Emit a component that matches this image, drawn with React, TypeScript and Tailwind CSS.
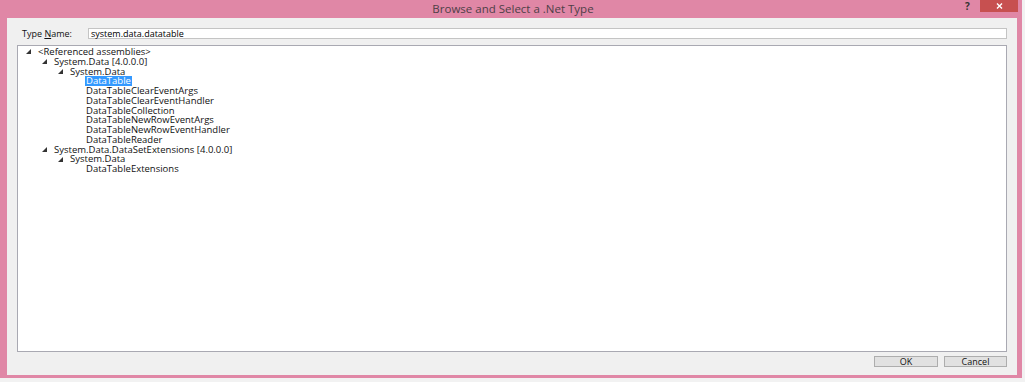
type Node = { label: string; depth: number; expander?: boolean; selected?: boolean };

const rows: Node[] = [
  { label: '<Referenced assemblies>', depth: 0, expander: true },
  { label: 'System.Data [4.0.0.0]', depth: 1, expander: true },
  { label: 'System.Data', depth: 2, expander: true },
  { label: 'DataTable', depth: 3, selected: true },
  { label: 'DataTableClearEventArgs', depth: 3 },
  { label: 'DataTableClearEventHandler', depth: 3 },
  { label: 'DataTableCollection', depth: 3 },
  { label: 'DataTableNewRowEventArgs', depth: 3 },
  { label: 'DataTableNewRowEventHandler', depth: 3 },
  { label: 'DataTableReader', depth: 3 },
  { label: 'System.Data.DataSetExtensions [4.0.0.0]', depth: 1, expander: true },
  { label: 'System.Data', depth: 2, expander: true },
  { label: 'DataTableExtensions', depth: 3 },
];

const indents = ['pl-[7px]', 'pl-[23px]', 'pl-[39px]', 'pl-[55px]'];

function Expander() {
  return (
    <svg width="7" height="7" viewBox="0 0 7 7" className="mr-[5px] shrink-0">
      <path d="M6 1 L6 6 L1 6 Z" fill="#333" />
    </svg>
  );
}

export default function App() {
  return (
    <div className="w-[1025px] h-[382px] bg-[#f2f2f2] overflow-hidden font-['Open_Sans','Noto_Sans',sans-serif]">
      <div className="w-[1022px] h-[378px] bg-[#e087a6] flex flex-col">
        <div className="h-[18px] relative flex items-center justify-center">
          <span className="text-[11.5px] text-[#4e3f47] leading-none ml-[4px]">Browse and Select a .Net Type</span>
          <span className="absolute left-[965px] top-[1px] text-[10px] font-bold text-[#333] leading-none">?</span>
          <div className="absolute left-[980px] top-0 w-[38px] h-[12px] bg-[#c75050] flex items-center justify-center">
            <svg width="7" height="6" viewBox="0 0 7 6">
              <path d="M1 0.5 L6 5.5 M6 0.5 L1 5.5" stroke="#fff" strokeWidth="1.4" />
            </svg>
          </div>
        </div>
        <div className="ml-[7px] mr-[5px] h-[357px] bg-[#f0f0f0] flex flex-col px-[10px] pt-[10px]">
          <div className="flex items-center h-[11px]">
            <span className="w-[71px] pl-[5px] text-[9px] text-[#111] leading-none">
              Type <span className="underline">N</span>ame:
            </span>
            <div className="flex-1 h-[11px] bg-white border border-[#c4c4c4] flex items-center px-[2px] text-[9px] text-black leading-none">
              system.data.datatable
            </div>
          </div>
          <div className="mt-[6px] h-[307px] bg-white border border-[#a9a9b2] pt-[1px]">
            {rows.map((r, i) => (
              <div key={i} className={`h-[9.75px] flex items-center ${indents[r.depth]}`}>
                {r.expander ? <Expander /> : <span className="w-[12px] shrink-0" />}
                <span
                  className={`text-[9.5px] leading-[9.75px] whitespace-nowrap px-[1px] ${
                    r.selected ? 'bg-[#3399ff] text-white' : 'text-[#111]'
                  }`}
                >
                  {r.label}
                </span>
              </div>
            ))}
          </div>
          <div className="flex justify-end gap-[6px] mt-[4px]">
            <button className="w-[64px] h-[11px] bg-[#e1e1e1] border border-[#adadad] text-[9px] text-[#111] leading-none flex items-center justify-center">
              OK
            </button>
            <button className="w-[63px] h-[11px] bg-[#e1e1e1] border border-[#adadad] text-[9px] text-[#111] leading-none flex items-center justify-center">
              Cancel
            </button>
          </div>
        </div>
      </div>
    </div>
  );
}
